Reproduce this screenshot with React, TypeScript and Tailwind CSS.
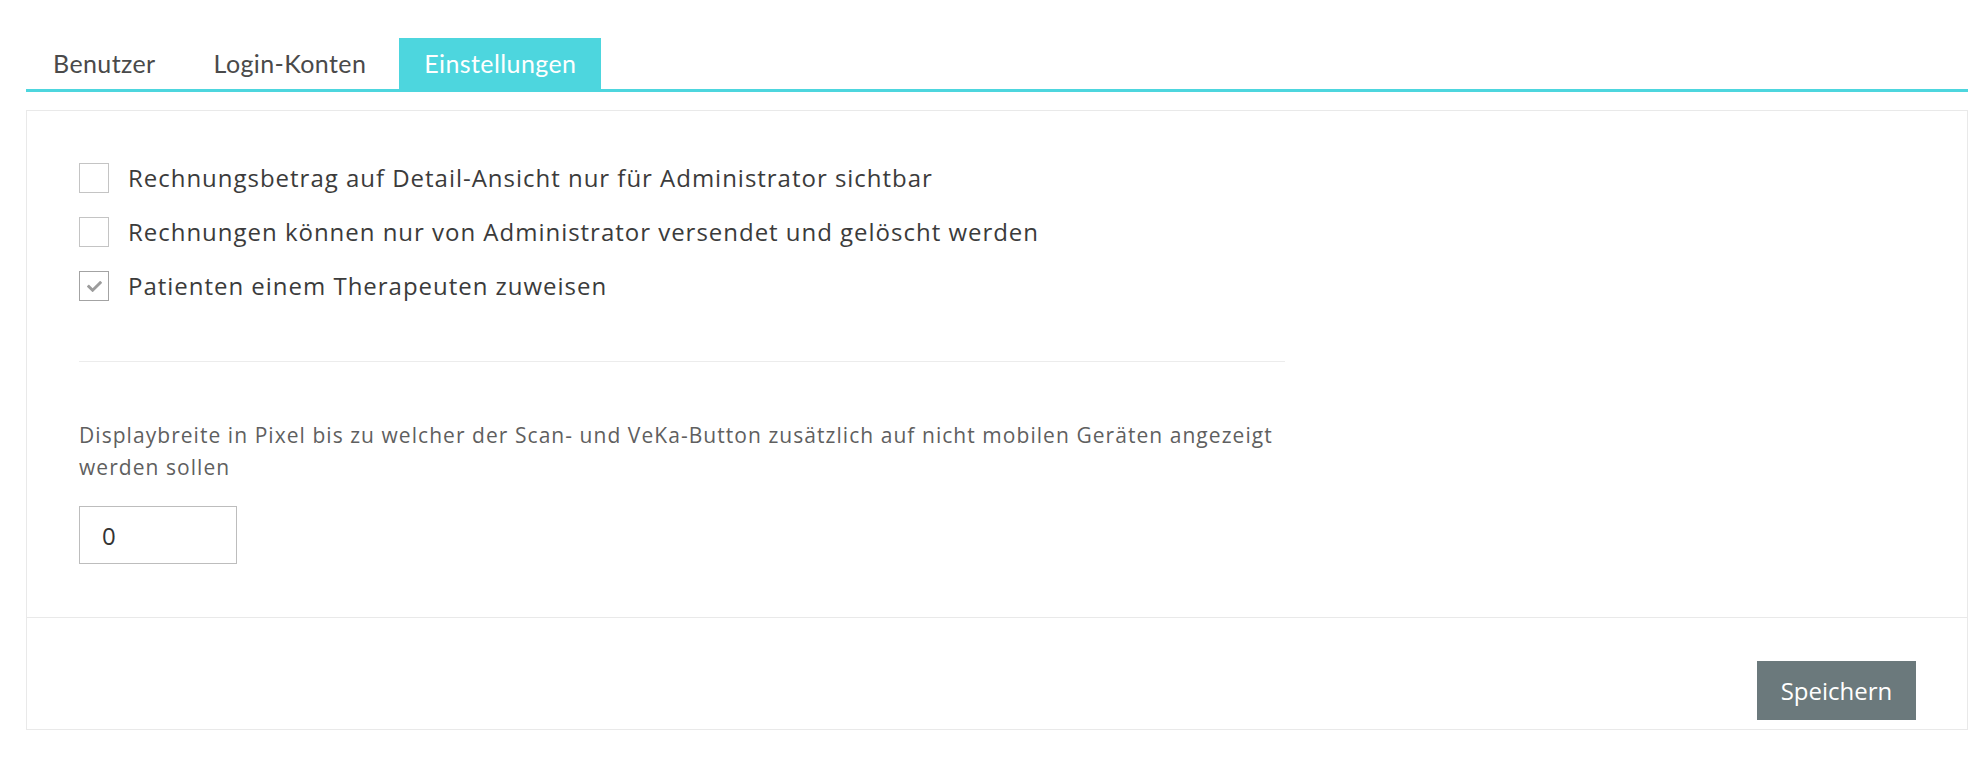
import { useState } from 'react'
import { FaCheck } from 'react-icons/fa'

const tabs = ['Benutzer', 'Login-Konten', 'Einstellungen']

const options = [
  { id: 'amount', label: 'Rechnungsbetrag auf Detail-Ansicht nur für Administrator sichtbar', checked: false },
  { id: 'send', label: 'Rechnungen können nur von Administrator versendet und gelöscht werden', checked: false },
  { id: 'assign', label: 'Patienten einem Therapeuten zuweisen', checked: true },
]

function Checkbox({ label, checked, onToggle }: { label: string; checked: boolean; onToggle: () => void }) {
  return (
    <label className="flex items-center gap-[19px] cursor-pointer" onClick={onToggle}>
      <span
        className={`w-[30px] h-[30px] flex items-center justify-center bg-white border ${
          checked ? 'border-[#a3a3a3]' : 'border-[#c4c4c4]'
        }`}
      >
        {checked && <FaCheck className="w-[15px] h-[15px] text-[#9c9c9c]" />}
      </span>
      <span className="text-[24px] leading-[30px] tracking-[0.98px] text-[#3b3b3b]">{label}</span>
    </label>
  )
}

export default function App() {
  const [activeTab, setActiveTab] = useState('Einstellungen')
  const [values, setValues] = useState(options.map(o => o.checked))
  const [width, setWidth] = useState('0')

  return (
    <div className="min-h-screen bg-white pt-[38px] pl-[26px] pr-[17px] font-['Open_Sans',sans-serif]">
      {/* Tab bar */}
      <div className="flex gap-[8px] pl-[2px] border-b-[3px] border-[#4dd6de]">
        {tabs.map(tab => (
          <button
            key={tab}
            onClick={() => setActiveTab(tab)}
            className={`h-[51px] px-[25px] text-[25px] leading-none tracking-[0.4px] font-['Lato',sans-serif] ${
              activeTab === tab ? 'bg-[#4dd6de] text-white' : 'text-[#4a4a4a]'
            }`}
          >
            {tab}
          </button>
        ))}
      </div>

      {/* Settings panel */}
      <div className="mt-[18px] border border-[#e9e9e9]">
        <div className="pt-[52px] pb-[53px] pl-[52px]">
          <div className="flex flex-col gap-[24px]">
            {options.map((o, i) => (
              <Checkbox
                key={o.id}
                label={o.label}
                checked={values[i]}
                onToggle={() => setValues(v => v.map((x, j) => (j === i ? !x : x)))}
              />
            ))}
          </div>

          <div className="w-[1206px] h-px bg-[#ececec] mt-[60px]" />

          <div className="w-[1206px] mt-[57px]">
            <p className="text-[21px] leading-[32px] tracking-[1.05px] text-[#5f5f5f]">
              Displaybreite in Pixel bis zu welcher der Scan- und VeKa-Button zusätzlich auf nicht mobilen Geräten angezeigt werden sollen
            </p>
            <input
              type="text"
              value={width}
              onChange={e => setWidth(e.target.value)}
              className="mt-[23px] w-[158px] h-[58px] px-[22px] border border-[#bdbdbd] text-[24px] text-[#333] outline-none"
            />
          </div>
        </div>

        {/* Footer */}
        <div className="border-t border-[#e9e9e9] flex justify-end pt-[43px] pb-[9px] pr-[51px]">
          <button className="w-[159px] h-[59px] bg-[#6b797c] text-white text-[24px]">
            Speichern
          </button>
        </div>
      </div>
    </div>
  )
}
